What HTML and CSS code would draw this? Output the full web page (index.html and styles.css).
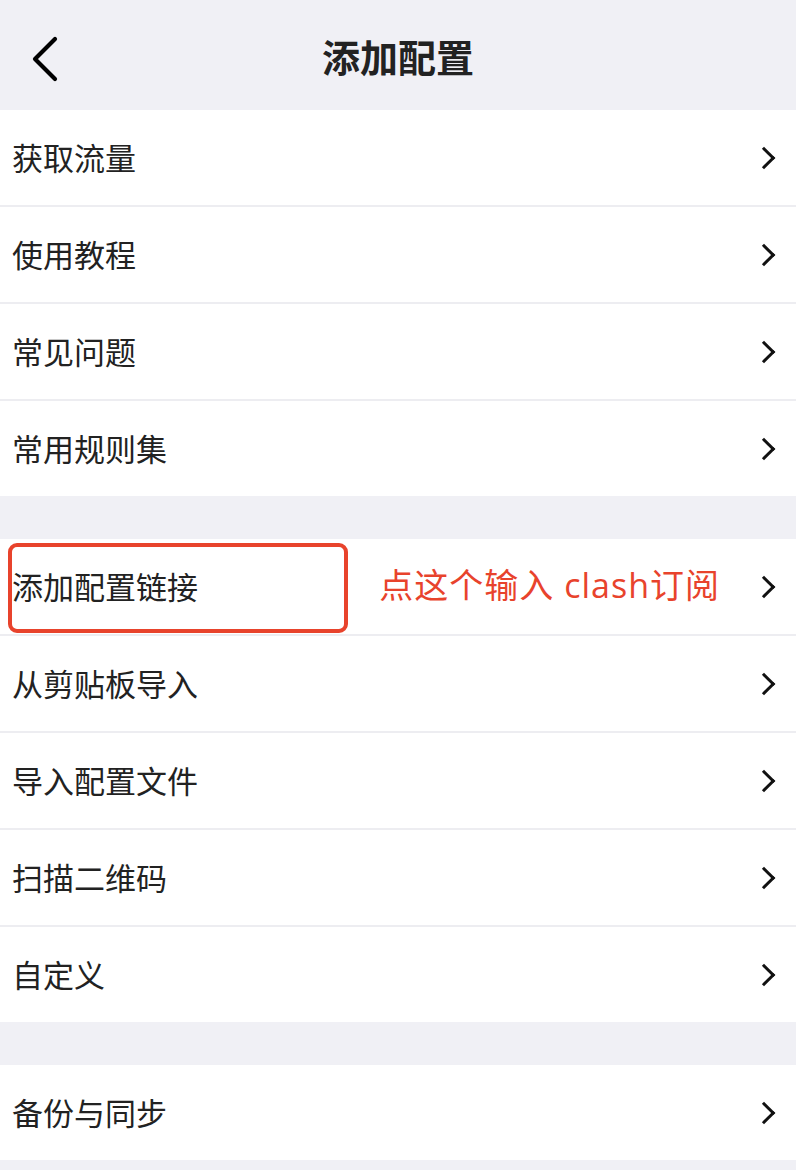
FILE: index.html
```html
<!DOCTYPE html>
<html lang="zh-CN">
<head>
<meta charset="utf-8">
<title>添加配置</title>
<link rel="stylesheet" href="styles.css">
</head>
<body>
<div class="page">
  <header class="navbar">
    <span class="back">
      <svg width="30" height="48" viewBox="0 0 30 48"><path d="M25 4 L5 24 L25 44" fill="none" stroke="#000" stroke-width="4.2" stroke-linecap="round" stroke-linejoin="round"/></svg>
    </span>
    <h1 class="title">添加配置</h1>
  </header>

  <section class="group">
    <div class="row"><span class="label">获取流量</span><span class="chev"></span></div>
    <div class="row"><span class="label">使用教程</span><span class="chev"></span></div>
    <div class="row"><span class="label">常见问题</span><span class="chev"></span></div>
    <div class="row"><span class="label">常用规则集</span><span class="chev"></span></div>
  </section>

  <section class="group">
    <div class="row highlighted">
      <span class="label">添加配置链接</span>
      <span class="note">点这个输入 clash订阅</span>
      <span class="chev"></span>
      <span class="marker"></span>
    </div>
    <div class="row"><span class="label">从剪贴板导入</span><span class="chev"></span></div>
    <div class="row"><span class="label">导入配置文件</span><span class="chev"></span></div>
    <div class="row"><span class="label">扫描二维码</span><span class="chev"></span></div>
    <div class="row"><span class="label">自定义</span><span class="chev"></span></div>
  </section>

  <section class="group">
    <div class="row"><span class="label">备份与同步</span><span class="chev"></span></div>
  </section>
</div>
</body>
</html>
```

FILE: styles.css
```css
* { box-sizing: border-box; }
html, body { margin: 0; padding: 0; }
body {
  background: #f0f0f5;
  font-family: "Noto Sans CJK SC", "Noto Sans", sans-serif;
  color: #222;
}
.page {
  width: 796px;
  min-height: 1170px;
  background: #f0f0f5;
  display: flex;
  flex-direction: column;
  gap: 43px;
}
.navbar {
  height: 110px;
  display: flex;
  align-items: center;
  justify-content: center;
  position: relative;
  margin-bottom: -43px;
}
.back {
  position: absolute;
  left: 30px;
  top: 35px;
  width: 30px;
  height: 48px;
  display: block;
}
.back svg { display: block; }
.title {
  margin: 0;
  font-size: 38px;
  font-weight: 700;
  color: #222;
  line-height: 1;
  padding-top: 2px;
}
.group {
  background: #fff;
  display: flex;
  flex-direction: column;
}
.row {
  height: 97px;
  border-bottom: 2px solid #ededf1;
  display: flex;
  align-items: center;
  padding: 0 18px 3px 12px;
  position: relative;
}
.row:last-child {
  height: 95px;
  border-bottom: none;
}
.label {
  font-size: 31px;
  line-height: 1;
  color: #222;
  flex: 1;
}
.note {
  font-family: "Open Sans", "Noto Sans CJK SC", sans-serif;
  font-size: 34px;
  letter-spacing: 1px;
  line-height: 1;
  color: #e8432c;
  margin-right: 36px;
}
.chev {
  width: 16px;
  height: 16px;
  border-top: 3px solid #111;
  border-right: 3px solid #111;
  transform: rotate(45deg);
  margin-right: 6px;
  margin-top: 3px;
}
.marker {
  position: absolute;
  left: 8px;
  top: 4px;
  width: 340px;
  height: 90px;
  border: 4px solid #e8432c;
  border-radius: 9px;
}
```
